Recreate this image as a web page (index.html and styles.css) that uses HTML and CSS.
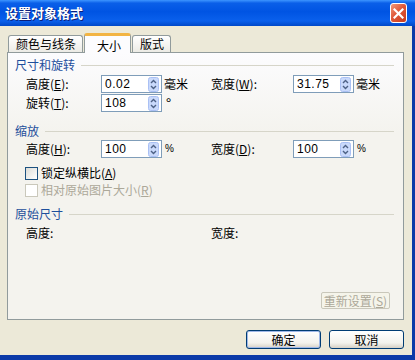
FILE: index.html
```html
<!DOCTYPE html>
<html>
<head>
    <title>设置对象格式</title>
    <link rel="stylesheet" href="styles.css">
</head>
<body>
<div class="window">
    <div class="titlebar">
        <span class="title">设置对象格式</span>
        <span class="close">
            <svg width="11" height="11" viewBox="0 0 11 11"><path d="M1.5 1.5 L9.5 9.5 M9.5 1.5 L1.5 9.5" stroke="#fff" stroke-width="2.2" stroke-linecap="square"/></svg>
        </span>
    </div>
    <div class="client">
        <div class="tabs">
            <div class="tab">颜色与线条</div>
            <div class="tab active">大小</div>
            <div class="tab">版式</div>
        </div>
        <div class="panel">
            <div class="group-title"><span>尺寸和旋转</span><i></i></div>
            <div class="row r1">
                <div class="field">
                    <label>高度(<u>E</u>):</label>
                    <div class="spin"><span class="val">0.02</span><svg class="arrows" width="11" height="15" viewBox="0 0 11 15"><rect x="0.5" y="0.5" width="10" height="14" rx="2" fill="#c9d9fb" stroke="#aac0f4"/><path d="M3 6 L5.5 3.5 L8 6" fill="none" stroke="#4d6185" stroke-width="1.4"/><path d="M3 9 L5.5 11.5 L8 9" fill="none" stroke="#4d6185" stroke-width="1.4"/></svg></div>
                    <span class="unit">毫米</span>
                </div>
                <div class="field right">
                    <label>宽度(<u>W</u>):</label>
                    <div class="spin"><span class="val">31.75</span><svg class="arrows" width="11" height="15" viewBox="0 0 11 15"><rect x="0.5" y="0.5" width="10" height="14" rx="2" fill="#c9d9fb" stroke="#aac0f4"/><path d="M3 6 L5.5 3.5 L8 6" fill="none" stroke="#4d6185" stroke-width="1.4"/><path d="M3 9 L5.5 11.5 L8 9" fill="none" stroke="#4d6185" stroke-width="1.4"/></svg></div>
                    <span class="unit">毫米</span>
                </div>
            </div>
            <div class="row r2">
                <div class="field">
                    <label>旋转(<u>T</u>):</label>
                    <div class="spin"><span class="val">108</span><svg class="arrows" width="11" height="15" viewBox="0 0 11 15"><rect x="0.5" y="0.5" width="10" height="14" rx="2" fill="#c9d9fb" stroke="#aac0f4"/><path d="M3 6 L5.5 3.5 L8 6" fill="none" stroke="#4d6185" stroke-width="1.4"/><path d="M3 9 L5.5 11.5 L8 9" fill="none" stroke="#4d6185" stroke-width="1.4"/></svg></div>
                    <span class="unit deg">°</span>
                </div>
            </div>

            <div class="group-title g2"><span>缩放</span><i></i></div>
            <div class="row r3">
                <div class="field">
                    <label>高度(<u>H</u>):</label>
                    <div class="spin"><span class="val">100</span><svg class="arrows" width="11" height="15" viewBox="0 0 11 15"><rect x="0.5" y="0.5" width="10" height="14" rx="2" fill="#c9d9fb" stroke="#aac0f4"/><path d="M3 6 L5.5 3.5 L8 6" fill="none" stroke="#4d6185" stroke-width="1.4"/><path d="M3 9 L5.5 11.5 L8 9" fill="none" stroke="#4d6185" stroke-width="1.4"/></svg></div>
                    <span class="unit pct">%</span>
                </div>
                <div class="field right">
                    <label>宽度(<u>D</u>):</label>
                    <div class="spin"><span class="val">100</span><svg class="arrows" width="11" height="15" viewBox="0 0 11 15"><rect x="0.5" y="0.5" width="10" height="14" rx="2" fill="#c9d9fb" stroke="#aac0f4"/><path d="M3 6 L5.5 3.5 L8 6" fill="none" stroke="#4d6185" stroke-width="1.4"/><path d="M3 9 L5.5 11.5 L8 9" fill="none" stroke="#4d6185" stroke-width="1.4"/></svg></div>
                    <span class="unit pct">%</span>
                </div>
            </div>
            <div class="check c1"><span class="box"></span>锁定纵横比(<u>A</u>)</div>
            <div class="check c2 disabled"><span class="box"></span>相对原始图片大小(<u>R</u>)</div>

            <div class="group-title g3"><span>原始尺寸</span><i></i></div>
            <div class="row r4">
                <div class="field"><label>高度:</label></div>
                <div class="field right"><label>宽度:</label></div>
            </div>

            <div class="reset">重新设置(<u>S</u>)</div>
        </div>
        <div class="buttons">
            <div class="btn default">确定</div>
            <div class="btn">取消</div>
        </div>
    </div>
</div>
</body>
</html>
```

FILE: styles.css
```css
body {
    margin: 0;
    width: 415px;
    height: 360px;
    overflow: hidden;
    font-family: "Noto Sans CJK SC", "DejaVu Sans", sans-serif;
    font-size: 12px;
    line-height: 14px;
    color: #000;
}
.window {
    width: 415px;
    height: 360px;
    display: flex;
    flex-direction: column;
    background: #0b3aa8;
}
.titlebar {
    height: 26px;
    display: flex;
    align-items: center;
    justify-content: space-between;
    padding: 0 8px 0 5px;
    background: linear-gradient(#3d95ff 0%, #0a5fe8 12%, #0054e3 45%, #0a60ec 80%, #0048c8 100%);
}
.title {
    color: #fff;
    font-weight: bold;
    font-size: 13px;
    text-shadow: 1px 1px #0a1e7a;
}
.close {
    width: 17px;
    height: 20px;
    box-sizing: border-box;
    border: 1px solid #fff;
    border-radius: 3px;
    background: linear-gradient(135deg, #f09a7c 0%, #e0593a 45%, #c73a1c 100%);
    display: flex;
    align-items: center;
    justify-content: center;
}
.client {
    flex: 1;
    margin: 0 3px 5px 0;
    background: #ece9d8;
    padding: 7px 8px 0 7px;
    display: flex;
    flex-direction: column;
}
.tabs {
    display: flex;
    align-items: flex-end;
    height: 20px;
    margin-bottom: -1px;
    padding-left: 1px;
    position: relative;
    z-index: 1;
}
.tab {
    height: 17px;
    box-sizing: border-box;
    padding: 1px 6px 0 7px;
    border: 1px solid #919b9c;
    border-bottom: none;
    border-radius: 3px 3px 0 0;
    background: linear-gradient(#fff, #ecebe5);
    margin-right: 1px;
    margin-bottom: 1px;
}
.tab.active {
    height: 20px;
    margin-bottom: 0;
    padding: 3px 9px 0 12px;
    border-top: 3px solid #f2b443;
    background: #fcfcfe;
}
.panel {
    height: 268px;
    box-sizing: border-box;
    border: 1px solid #919b9c;
    background: linear-gradient(#fcfcfe, #f4f3ee 30%);
    display: flex;
    flex-direction: column;
}
.group-title {
    display: flex;
    align-items: center;
    height: 14px;
    margin-top: 5px;
    padding: 0 9px 0 7px;
    color: #1e4f9c;
}
.group-title i {
    flex: 1;
    height: 1px;
    margin-left: 6px;
    background: #d6d5c9;
}
.group-title.g2 {
    margin-top: 12px;
}
.group-title.g3 {
    margin-top: 10px;
}
.row {
    display: flex;
    padding-left: 17px;
    height: 18px;
    align-items: center;
}
.r1 { margin-top: 3px; }
.r2 { margin-top: 1px; }
.r3 { margin-top: 2px; }
.r4 { margin-top: 5px; height: 14px; }
.field {
    width: 185px;
    display: flex;
    align-items: center;
}
.field label {
    width: 75px;
    padding-left: 1px;
}
.field.right label {
    width: 82px;
}
.spin {
    width: 61px;
    height: 18px;
    box-sizing: border-box;
    border: 1px solid #7f9db9;
    background: #fff;
    display: flex;
    align-items: center;
    justify-content: space-between;
    padding: 0 2px 0 3px;
}
.val {
    font-family: "Liberation Sans", "DejaVu Sans", sans-serif;
    font-size: 12px;
    letter-spacing: 0.5px;
}
.unit {
    margin-left: 2px;
}
.unit.deg {
    font-size: 14px;
    margin-left: 4px;
}
.unit.pct {
    font-family: "Liberation Sans", sans-serif;
    font-size: 10px;
    margin-left: 3px;
}
.check {
    display: flex;
    align-items: center;
    height: 14px;
    padding-left: 17px;
}
.check .box {
    width: 13px;
    height: 13px;
    box-sizing: border-box;
    border: 1px solid #1c5180;
    background: linear-gradient(135deg, #dcdcd7, #fff);
    margin-right: 3px;
}
.c1 { margin-top: 8px; }
.c2 { margin-top: 3px; }
.check.disabled {
    color: #aca899;
}
.check.disabled .box {
    border-color: #cac8bb;
    background: #fff;
}
.reset {
    margin-top: auto;
    margin-bottom: 10px;
    margin-right: 13px;
    align-self: flex-end;
    width: 69px;
    height: 17px;
    box-sizing: border-box;
    border: 1px solid #c9c7ba;
    border-radius: 2px;
    color: #aca899;
    text-align: center;
    line-height: 15px;
    background: #f5f4ea;
}
.buttons {
    display: flex;
    justify-content: flex-end;
    gap: 8px;
    margin-top: 10px;
    padding-right: 0;
}
.btn {
    width: 75px;
    height: 19px;
    box-sizing: border-box;
    border: 1px solid #003c74;
    border-radius: 3px;
    background: linear-gradient(#fff, #f3f2ed 70%, #d6d0c5);
    text-align: center;
    line-height: 17px;
}
.btn.default {
    box-shadow: inset 0 0 0 1px #9fb8e8;
}
```
